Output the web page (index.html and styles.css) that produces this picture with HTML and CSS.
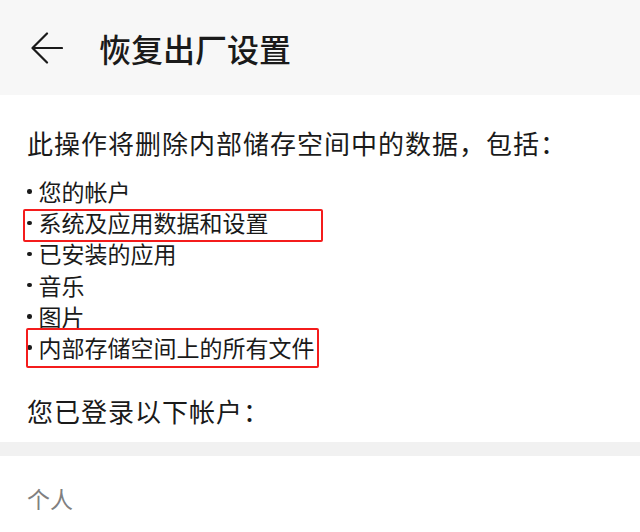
FILE: index.html
```html
<!DOCTYPE html>
<html lang="zh-CN">
<head>
<meta charset="utf-8">
<title>恢复出厂设置</title>
<link rel="stylesheet" href="styles.css">
</head>
<body>
<header class="appbar">
  <svg class="back" width="32" height="32" viewBox="0 0 32 32" aria-hidden="true">
    <path d="M31 16H2M16 1.5L1.5 16L16 30.5" fill="none" stroke="#1a1a1a" stroke-width="2.2" stroke-linecap="round" stroke-linejoin="round"/>
  </svg>
  <h1 class="title">恢复出厂设置</h1>
</header>
<main class="content">
  <p class="lead">此操作将删除内部储存空间中的数据，包括：</p>
  <ul class="items">
    <li>您的帐户</li>
    <li class="mark mark-a">系统及应用数据和设置</li>
    <li>已安装的应用</li>
    <li>音乐</li>
    <li>图片</li>
    <li class="mark mark-b">内部存储空间上的所有文件</li>
  </ul>
  <p class="lead accounts">您已登录以下帐户：</p>
</main>
<div class="divider"></div>
<section class="group">
  <p class="group-title">个人</p>
</section>
</body>
</html>
```
FILE: styles.css
```css
html, body {
  margin: 0;
  padding: 0;
  background: #ffffff;
  font-family: "Noto Sans CJK SC", "Noto Sans", sans-serif;
  color: #1a1a1a;
}

.appbar {
  height: 95px;
  background: #f7f7f7;
  display: flex;
  align-items: center;
  padding-left: 31px;
  box-sizing: border-box;
}

.back {
  display: block;
  flex: none;
}

.title {
  margin: 0 0 0 36px;
  font-size: 32px;
  font-weight: 500;
  line-height: 40px;
  color: #1a1a1a;
}

.content {
  padding: 30px 0 13px 27px;
}

.lead {
  margin: 0;
  font-size: 26px;
  line-height: 36px;
  letter-spacing: 1px;
}

.items {
  list-style: none;
  margin: 15px 0 0 0;
  padding: 0;
}

.items li {
  position: relative;
  display: flex;
  align-items: center;
  font-size: 23px;
  line-height: 31.2px;
  height: 31.2px;
}

.items li::before {
  content: "";
  width: 4.5px;
  height: 4.5px;
  border-radius: 50%;
  background: #1a1a1a;
  margin-right: 7px;
  flex: none;
}

.mark::after {
  content: "";
  position: absolute;
  border: 2px solid #f41c1c;
  border-radius: 2px;
  box-sizing: border-box;
}

.mark-a::after {
  left: -4px;
  top: 2px;
  width: 300px;
  height: 33px;
}

.mark-b::after {
  left: -1px;
  top: -4px;
  width: 293px;
  height: 40px;
}

.accounts {
  margin-top: 30px;
}

.divider {
  height: 14px;
  background: #f1f1f1;
}

.group {
  padding: 26px 0 0 27px;
}

.group-title {
  margin: 0;
  font-size: 23px;
  line-height: 32px;
  color: #808080;
}
```
